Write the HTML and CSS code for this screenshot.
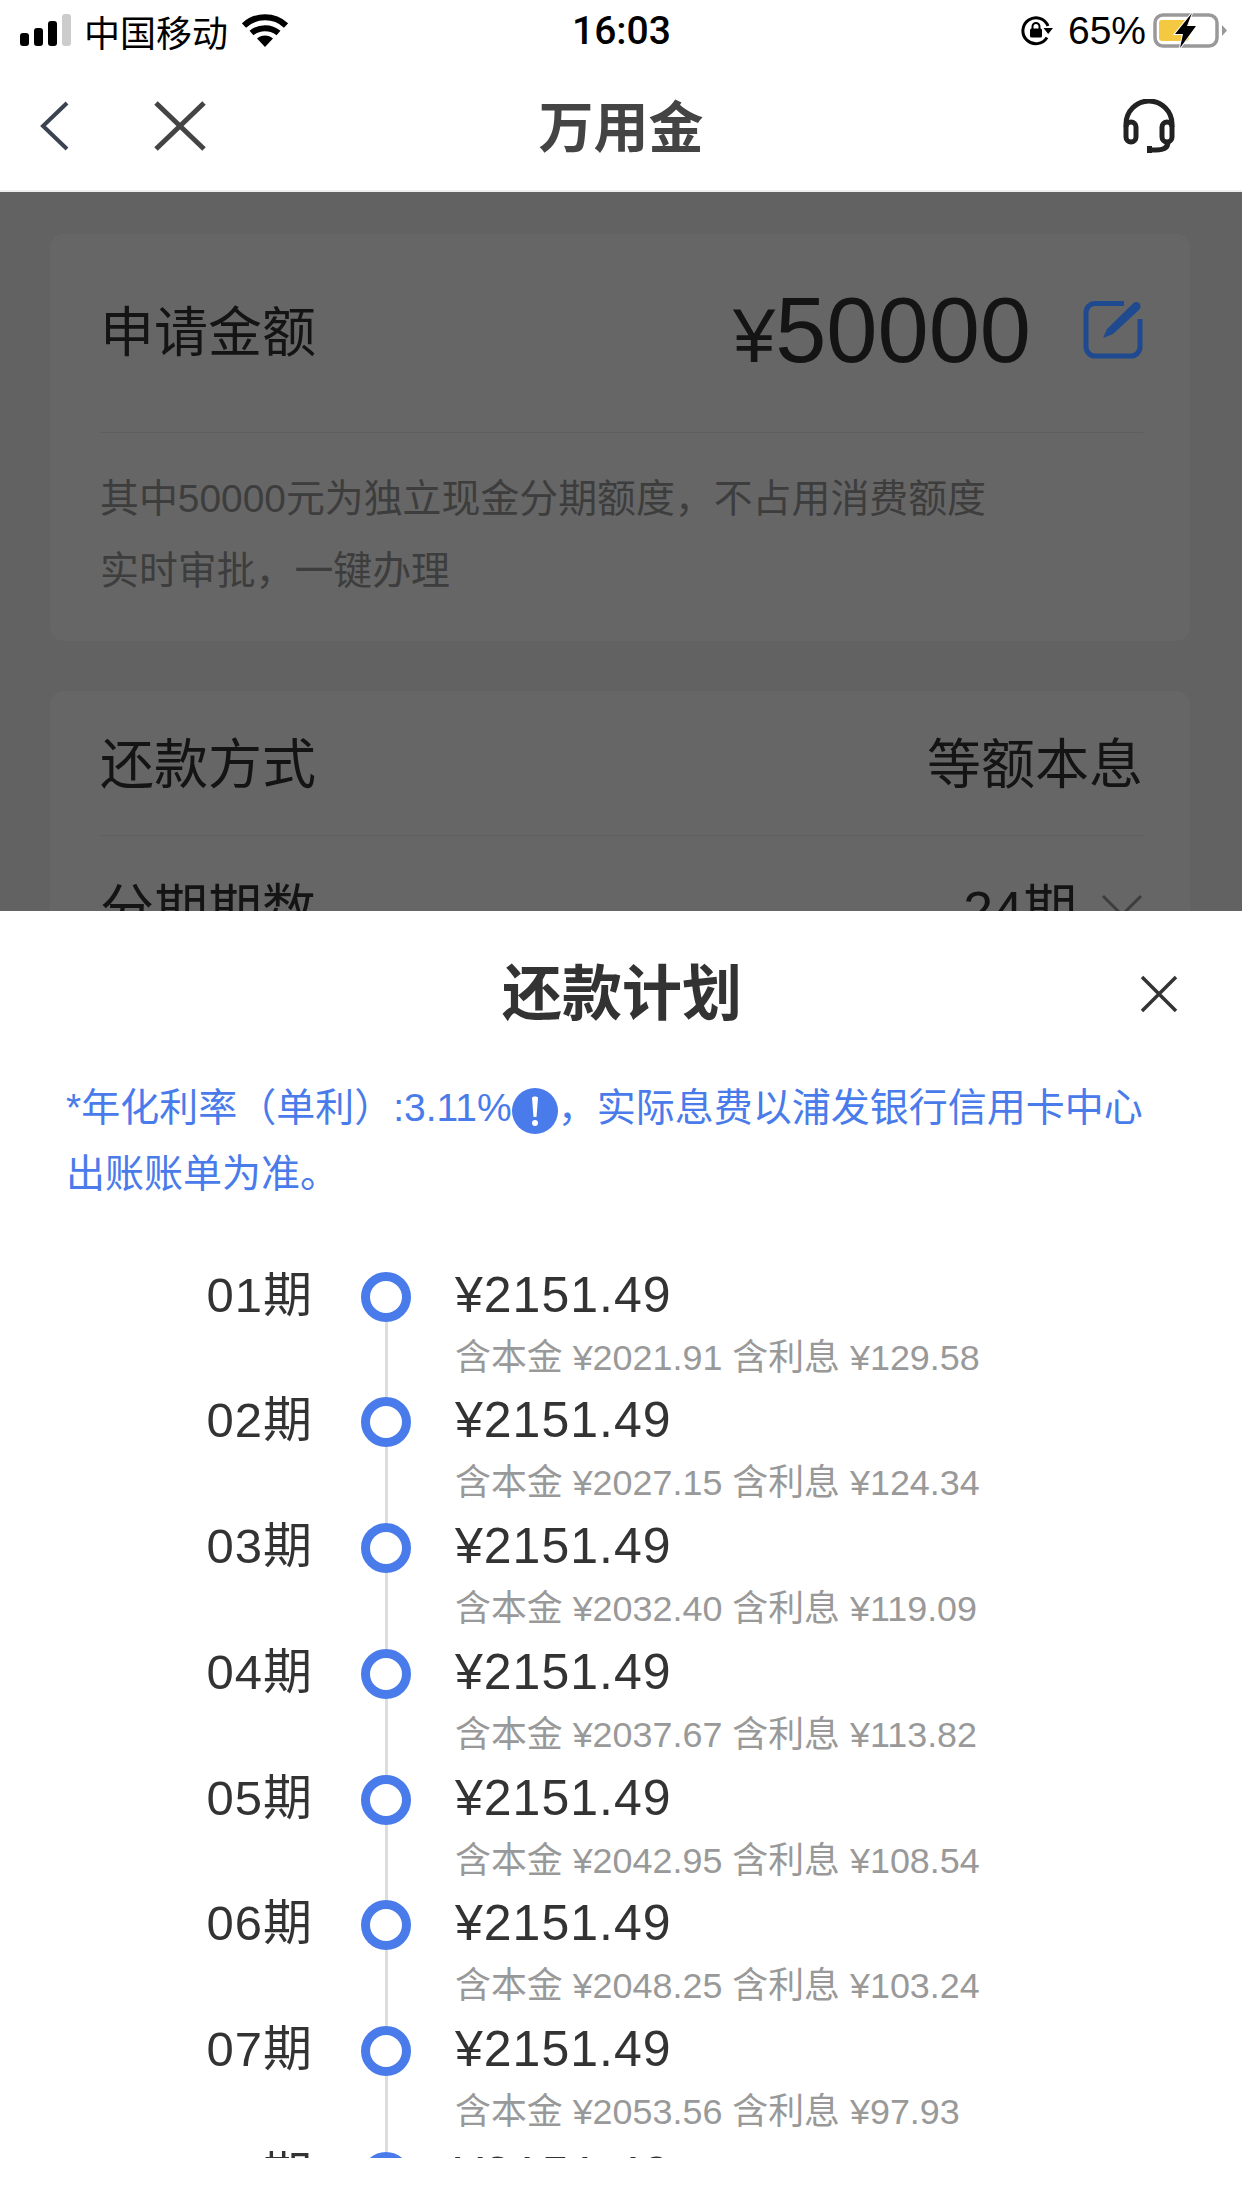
FILE: index.html
```html
<!DOCTYPE html>
<html lang="zh-CN">

<head>
    <meta charset="UTF-8">
    <meta name="viewport" content="width=device-width, initial-scale=1.0">
    <title>万用金</title>
    <link rel="stylesheet" href="styles.css">
</head>

<body>
    <div class="phone">
        <div class="status-bar">
            <div class="status-left">
                <svg class="signal" width="52" height="34" viewBox="0 0 52 34">
                    <rect x="0" y="19" width="9" height="13" rx="3" fill="#000" />
                    <rect x="14" y="14" width="9" height="18" rx="3" fill="#000" />
                    <rect x="28" y="7" width="9" height="25" rx="3" fill="#000" />
                    <rect x="42" y="0" width="9" height="32" rx="3" fill="#ccc" />
                </svg>
                <span class="carrier">中国移动</span>
                <svg class="wifi" width="46" height="34" viewBox="0 0 46 34">
                    <path d="M2 11.500C13.500 0.500 32.500 0.500 44 11.500" fill="none" stroke="#000" stroke-width="6" />
                    <path d="M9.500 19C17 12.500 29 12.500 36.500 19" fill="none" stroke="#000" stroke-width="6" />
                    <path d="M15 24.500C19.500 20.500 26.500 20.500 31 24.500L23 33Z" fill="#000" />
                </svg>
            </div>
            <span class="time">16:03</span>
            <div class="status-right">
                <svg class="lock" width="32" height="30" viewBox="0 0 32 30">
                    <path d="M26 21.500A13 13 0 1 1 27 10" fill="none" stroke="#000" stroke-width="3" />
                    <path d="M22.500 12H32L27.200 18Z" fill="#000" />
                    <rect x="9" y="12.500" width="12" height="9" rx="1.500" fill="#000" />
                    <path d="M11.500 13V10.500a3.500 3.500 0 0 1 7 0V13" fill="none" stroke="#000" stroke-width="2" />
                </svg>
                <span class="percent">65%</span>
                <svg class="battery" width="74" height="36" viewBox="0 0 74 36">
                    <rect x="2" y="2" width="62" height="31" rx="8" fill="none" stroke="#999" stroke-width="3.500" />
                    <rect x="6" y="7" width="30" height="21" rx="3" fill="#f5c842" />
                    <path d="M69 12 74 17.500 69 23Z" fill="#999" />
                    <path d="M39 0 22 21H30L27 35 43 13H34Z" fill="#000" stroke="#fff" stroke-width="2" paint-order="stroke" />
                </svg>
            </div>
        </div>

        <div class="nav-bar">
            <div class="nav-left">
                <svg class="nav-back" width="30" height="50" viewBox="0 0 30 50">
                    <path d="M27 2 3 25 27 48" fill="none" stroke="#3b4250" stroke-width="4" />
                </svg>
                <svg class="nav-close" width="52" height="50" viewBox="0 0 52 50">
                    <path d="M2 2 50 48M50 2 2 48" fill="none" stroke="#444" stroke-width="5" />
                </svg>
            </div>
            <div class="nav-title">万用金</div>
            <svg class="nav-service" width="52" height="55" viewBox="0 0 52 55">
                <path d="M3 28V25a23 23 0 0 1 46 0V28" fill="none" stroke="#222" stroke-width="5" />
                <rect x="3" y="23" width="10" height="20" rx="5" fill="none" stroke="#222" stroke-width="5" />
                <rect x="39" y="23" width="10" height="20" rx="5" fill="none" stroke="#222" stroke-width="5" />
                <path d="M45 43C45 49 40 51 33 51H26" fill="none" stroke="#222" stroke-width="5" />
                <rect x="24" y="47" width="5" height="7" fill="#222" />
            </svg>
        </div>

        <div class="page">
            <div class="card">
                <div class="amount-row">
                    <span class="row-label amount-label">申请金额</span>
                    <div class="amount-right">
                        <span class="amount"><span class="amount-sign">¥</span>50000</span>
                        <svg class="edit-icon" width="60" height="60" viewBox="0 0 60 60">
                            <path d="M41 3.500H12a9 9 0 0 0-9 9V47a9 9 0 0 0 9 9H48a9 9 0 0 0 9-9V19" fill="none" stroke="#1f4a8f" stroke-width="5" />
                            <path d="M20 38 24 29 50 3.500C52 1.500 55 1.500 56.500 3.500S58 8 56 10L30 34Z" fill="#1f4a8f" />
                        </svg>
                    </div>
                </div>
                <div class="card-note">
                    <p>其中50000元为独立现金分期额度，不占用消费额度</p>
                    <p>实时审批，一键办理</p>
                </div>
            </div>

            <div class="card">
                <div class="card-row">
                    <span class="row-label">还款方式</span>
                    <span class="row-value">等额本息</span>
                </div>
                <div class="card-row">
                    <span class="row-label">分期期数</span>
                    <div class="row-select">
                        <span class="row-value">24期</span>
                        <svg width="42" height="24" viewBox="0 0 42 24">
                            <path d="M2 2 21 21 40 2" fill="none" stroke="#999" stroke-width="3" />
                        </svg>
                    </div>
                </div>
            </div>
            <div class="mask"></div>
        </div>

        <div class="sheet">
            <div class="sheet-head">
                <h2 class="sheet-title">还款计划</h2>
                <svg class="sheet-close" width="38" height="38" viewBox="0 0 38 38">
                    <path d="M2 2 36 36M36 2 2 36" fill="none" stroke="#333" stroke-width="3.500" />
                </svg>
            </div>
            <p class="notice">*年化利率（单利）:3.11%<svg class="notice-icon" width="46" height="46" viewBox="0 0 46 46">
                    <circle cx="23" cy="23" r="23" fill="#4a7bea" />
                    <path d="M20 10C20 8 26 8 26 10L24.500 29H21.500Z" fill="#fff" />
                    <circle cx="23" cy="35" r="3" fill="#fff" />
                </svg>，实际息费以浦发银行信用卡中心出账账单为准。</p>

            <div class="plan">
                <div class="plan-row">
                    <div class="plan-no">01期</div>
                    <div class="plan-node"><i class="dot"></i><i class="line"></i></div>
                    <div class="plan-info">
                        <div class="plan-money">¥2151.49</div>
                        <div class="plan-sub">含本金 ¥2021.91 含利息 ¥129.58</div>
                    </div>
                </div>
                <div class="plan-row">
                    <div class="plan-no">02期</div>
                    <div class="plan-node"><i class="dot"></i><i class="line"></i></div>
                    <div class="plan-info">
                        <div class="plan-money">¥2151.49</div>
                        <div class="plan-sub">含本金 ¥2027.15 含利息 ¥124.34</div>
                    </div>
                </div>
                <div class="plan-row">
                    <div class="plan-no">03期</div>
                    <div class="plan-node"><i class="dot"></i><i class="line"></i></div>
                    <div class="plan-info">
                        <div class="plan-money">¥2151.49</div>
                        <div class="plan-sub">含本金 ¥2032.40 含利息 ¥119.09</div>
                    </div>
                </div>
                <div class="plan-row">
                    <div class="plan-no">04期</div>
                    <div class="plan-node"><i class="dot"></i><i class="line"></i></div>
                    <div class="plan-info">
                        <div class="plan-money">¥2151.49</div>
                        <div class="plan-sub">含本金 ¥2037.67 含利息 ¥113.82</div>
                    </div>
                </div>
                <div class="plan-row">
                    <div class="plan-no">05期</div>
                    <div class="plan-node"><i class="dot"></i><i class="line"></i></div>
                    <div class="plan-info">
                        <div class="plan-money">¥2151.49</div>
                        <div class="plan-sub">含本金 ¥2042.95 含利息 ¥108.54</div>
                    </div>
                </div>
                <div class="plan-row">
                    <div class="plan-no">06期</div>
                    <div class="plan-node"><i class="dot"></i><i class="line"></i></div>
                    <div class="plan-info">
                        <div class="plan-money">¥2151.49</div>
                        <div class="plan-sub">含本金 ¥2048.25 含利息 ¥103.24</div>
                    </div>
                </div>
                <div class="plan-row">
                    <div class="plan-no">07期</div>
                    <div class="plan-node"><i class="dot"></i><i class="line"></i></div>
                    <div class="plan-info">
                        <div class="plan-money">¥2151.49</div>
                        <div class="plan-sub">含本金 ¥2053.56 含利息 ¥97.93</div>
                    </div>
                </div>
                <div class="plan-row">
                    <div class="plan-no">08期</div>
                    <div class="plan-node"><i class="dot"></i><i class="line"></i></div>
                    <div class="plan-info">
                        <div class="plan-money">¥2151.49</div>
                        <div class="plan-sub">含本金 ¥2058.89 含利息 ¥92.60</div>
                    </div>
                </div>
            </div>
        </div>
    </div>
</body>

</html>
```

FILE: styles.css
```css
* {
    margin: 0;
    padding: 0;
    box-sizing: border-box;
}

body {
    width: 1242px;
    height: 2208px;
    overflow: hidden;
    font-family: "Liberation Sans", "Noto Sans CJK SC", sans-serif;
    color: #333;
    background-color: #fff;
}

.phone {
    position: relative;
    width: 1242px;
    height: 2208px;
    overflow: hidden;
}

/* 状态栏 */
.status-bar {
    position: relative;
    display: flex;
    justify-content: space-between;
    align-items: center;
    height: 62px;
    padding: 0 15px 0 20px;
    color: #000;
}

.status-left,
.status-right {
    display: flex;
    align-items: center;
}

.carrier {
    margin-left: 12px;
    font-size: 36px;
}

.wifi {
    margin-left: 14px;
}

.time {
    position: absolute;
    left: 572px;
    font-size: 39px;
    font-family: Roboto, "Liberation Sans", sans-serif;
    font-weight: 500;
}

.percent {
    margin: 0 7px 0 15px;
    font-size: 39px;
}

/* 导航栏 */
.nav-bar {
    position: relative;
    display: flex;
    justify-content: space-between;
    align-items: center;
    height: 128px;
    padding: 0 67px 0 40px;
}

.nav-left {
    display: flex;
    align-items: center;
    gap: 84px;
}

.nav-title {
    position: absolute;
    left: 0;
    right: 0;
    padding-bottom: 6px;
    text-align: center;
    font-size: 55px;
    font-weight: bold;
    color: #444;
    pointer-events: none;
}

/* 底层页面 */
.page {
    position: relative;
    height: 2018px;
    padding: 42px 52px 0 50px;
    background-color: #f5f5f5;
    border-top: 2px solid #eee;
}

.mask {
    position: absolute;
    top: 0;
    left: 0;
    right: 0;
    bottom: 0;
    background-color: rgba(0, 0, 0, 0.6);
}

.card {
    margin-bottom: 50px;
    padding: 0 47px 0 50px;
    background-color: #fff;
    border-radius: 14px;
}

.amount-row {
    display: flex;
    justify-content: space-between;
    align-items: center;
    height: 199px;
    padding-bottom: 6px;
    border-bottom: 1px solid #eee;
}

.row-label {
    font-size: 54px;
    color: #333;
}

.amount-label {
    margin-bottom: 4px;
}

.amount-right {
    display: flex;
    align-items: center;
    gap: 52px;
}

.amount {
    font-size: 92px;
    color: #333;
}

.amount-sign {
    font-size: 76px;
}

.edit-icon {
    position: relative;
    z-index: 1;
}

.card-note {
    padding: 30px 0 34px;
    font-size: 38.9px;
    line-height: 72px;
    color: #999;
}

.card-row {
    display: flex;
    justify-content: space-between;
    align-items: center;
    height: 145px;
    padding-bottom: 5px;
    border-bottom: 1px solid #eee;
}

.row-value {
    font-size: 54px;
    color: #333;
}

.row-select {
    display: flex;
    align-items: center;
    gap: 24px;
}

/* 还款计划弹层 */
.sheet {
    position: absolute;
    left: 0;
    right: 0;
    bottom: 0;
    height: 1297px;
    background-color: #fff;
}

.sheet-head {
    position: relative;
    display: flex;
    justify-content: center;
    align-items: center;
    height: 164px;
    padding: 0 0 10px 2px;
}

.sheet-title {
    font-size: 60px;
    font-weight: bold;
    color: #333;
}

.sheet-close {
    position: absolute;
    left: 1140px;
    top: 64px;
}

.notice {
    width: 1090px;
    margin-left: 66px;
    font-size: 39px;
    line-height: 66px;
    color: #4a7bea;
}

.notice-icon {
    vertical-align: -13px;
}

.plan {
    height: 886.5px;
    margin-top: 64.5px;
    padding-left: 190px;
    overflow: hidden;
}

.plan-row {
    display: flex;
    height: 125.8px;
}

.plan-no {
    width: 123px;
    font-size: 49px;
    line-height: 46px;
    letter-spacing: 1px;
    text-align: right;
    color: #333;
}

.plan-node {
    display: flex;
    flex-direction: column;
    align-items: center;
    width: 50px;
    margin: 0 44px 0 48px;
}

.dot {
    flex: none;
    width: 50px;
    height: 50px;
    border: 9px solid #4a7bea;
    border-radius: 50%;
}

.line {
    flex: 1;
    width: 3px;
    background-color: #ddd;
}

.plan-money {
    font-size: 50px;
    line-height: 46px;
    letter-spacing: 1px;
    color: #333;
}

.plan-sub {
    margin-top: 19px;
    font-size: 35.9px;
    line-height: 42px;
    color: #999;
}
```
